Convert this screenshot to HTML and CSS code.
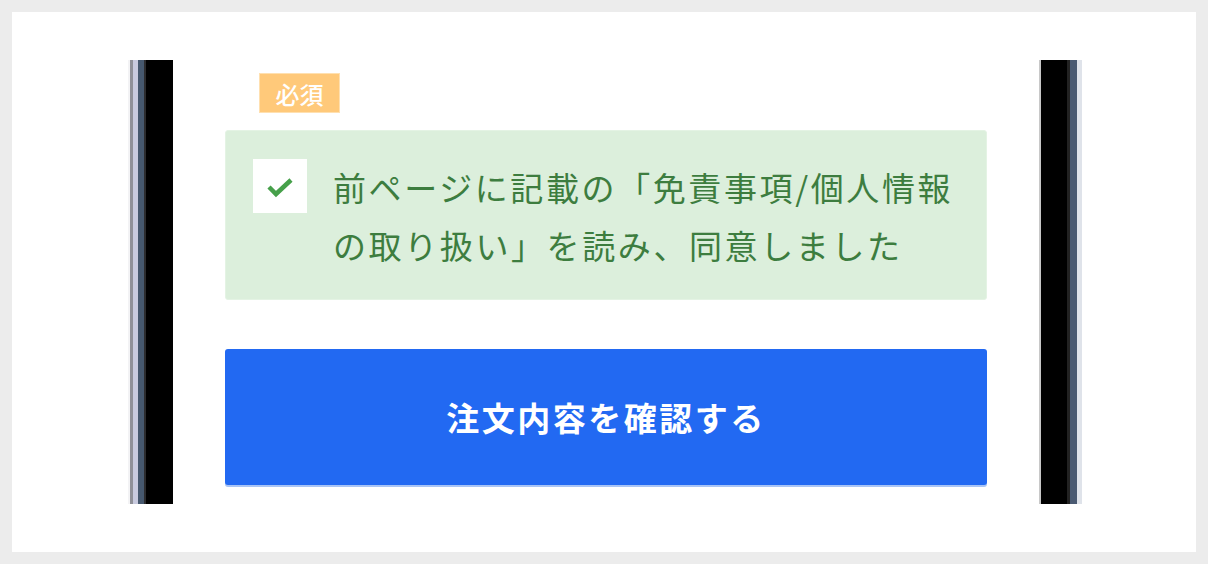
FILE: index.html
```html
<!DOCTYPE html>
<html lang="ja">
<head>
<meta charset="utf-8">
<link rel="stylesheet" href="styles.css">
</head>
<body>
<div class="panel">
  <div class="phone">
    <div class="bezel-left"></div>
    <div class="screen">
      <div class="badge-row"><span class="badge">必須</span></div>
      <div class="agree">
        <div class="checkbox">
          <svg width="30" height="24" viewBox="0 0 30 24"><path d="M4 12 L11 19 L26 5" fill="none" stroke="#46a04a" stroke-width="4.5" stroke-linejoin="miter"/></svg>
        </div>
        <p class="agree-text">前ページに記載の「免責事項/個人情報の取り扱い」を読み、同意しました</p>
      </div>
      <button class="submit">注文内容を確認する</button>
    </div>
    <div class="bezel-right"></div>
  </div>
</div>
</body>
</html>
```
FILE: styles.css
```css
html, body {
  margin: 0;
  padding: 0;
}
body {
  background: #ececec;
  padding: 12px;
  font-family: "Noto Sans CJK JP", "Noto Sans", sans-serif;
}
.panel {
  background: #ffffff;
  width: 1184px;
  height: 540px;
  padding: 48px 0 48px 116px;
  box-sizing: border-box;
}
.phone {
  display: flex;
  height: 444px;
  width: 954px;
}
.bezel-left {
  width: 45px;
  flex: none;
  background: linear-gradient(to right,
    #f3f3f5 0, #f3f3f5 2px,
    #8f9098 2px, #8f9098 5px,
    #c8cade 5px, #c8cade 10px,
    #46586e 10px, #46586e 16px,
    #2c2c2e 16px, #2c2c2e 18px,
    #000 18px, #000 45px);
}
.bezel-right {
  width: 43px;
  flex: none;
  background: linear-gradient(to right,
    #c8c8c8 0, #c8c8c8 2px,
    #000 2px, #000 28px,
    #222 28px, #222 31px,
    #4a5a72 31px, #4a5a72 38px,
    #dfe3ea 38px, #dfe3ea 43px);
}
.screen {
  width: 866px;
  flex: none;
  background: #fff;
  box-sizing: border-box;
  padding: 13px 52px 0 52px;
  display: flex;
  flex-direction: column;
}
.badge-row {
  padding-left: 34px;
  height: 57px;
}
.badge {
  display: inline-flex;
  align-items: center;
  justify-content: center;
  width: 81px;
  height: 40px;
  background: #ffc97a;
  color: #fff;
  font-size: 24px;
  font-weight: 500;
  box-sizing: border-box;
  border: 1px solid #ffe0b0;
}
.agree {
  display: flex;
  align-items: flex-start;
  gap: 26px;
  height: 170px;
  box-sizing: border-box;
  background: #dcefdc;
  border: 1px solid #e4f3e4;
  border-radius: 3px;
  padding: 28px 10px 0 27px;
}
.checkbox {
  flex: none;
  width: 54px;
  height: 54px;
  background: #fff;
  display: flex;
  align-items: center;
  justify-content: center;
  padding-top: 2px;
  box-sizing: border-box;
}
.agree-text {
  margin: -1px 0 0 0;
  font-size: 33px;
  line-height: 58px;
  letter-spacing: 2.6px;
  color: #3d7d3f;
}
.submit {
  margin-top: 49px;
  height: 136px;
  width: 762px;
  border: none;
  border-radius: 3px;
  background: #2269f2;
  color: #fff;
  font-family: "Noto Sans CJK JP", "Noto Sans", sans-serif;
  font-size: 33px;
  font-weight: 700;
  letter-spacing: 2.5px;
  box-shadow: 0 2px 0 #a9c4f5;
  padding: 0;
}
```
